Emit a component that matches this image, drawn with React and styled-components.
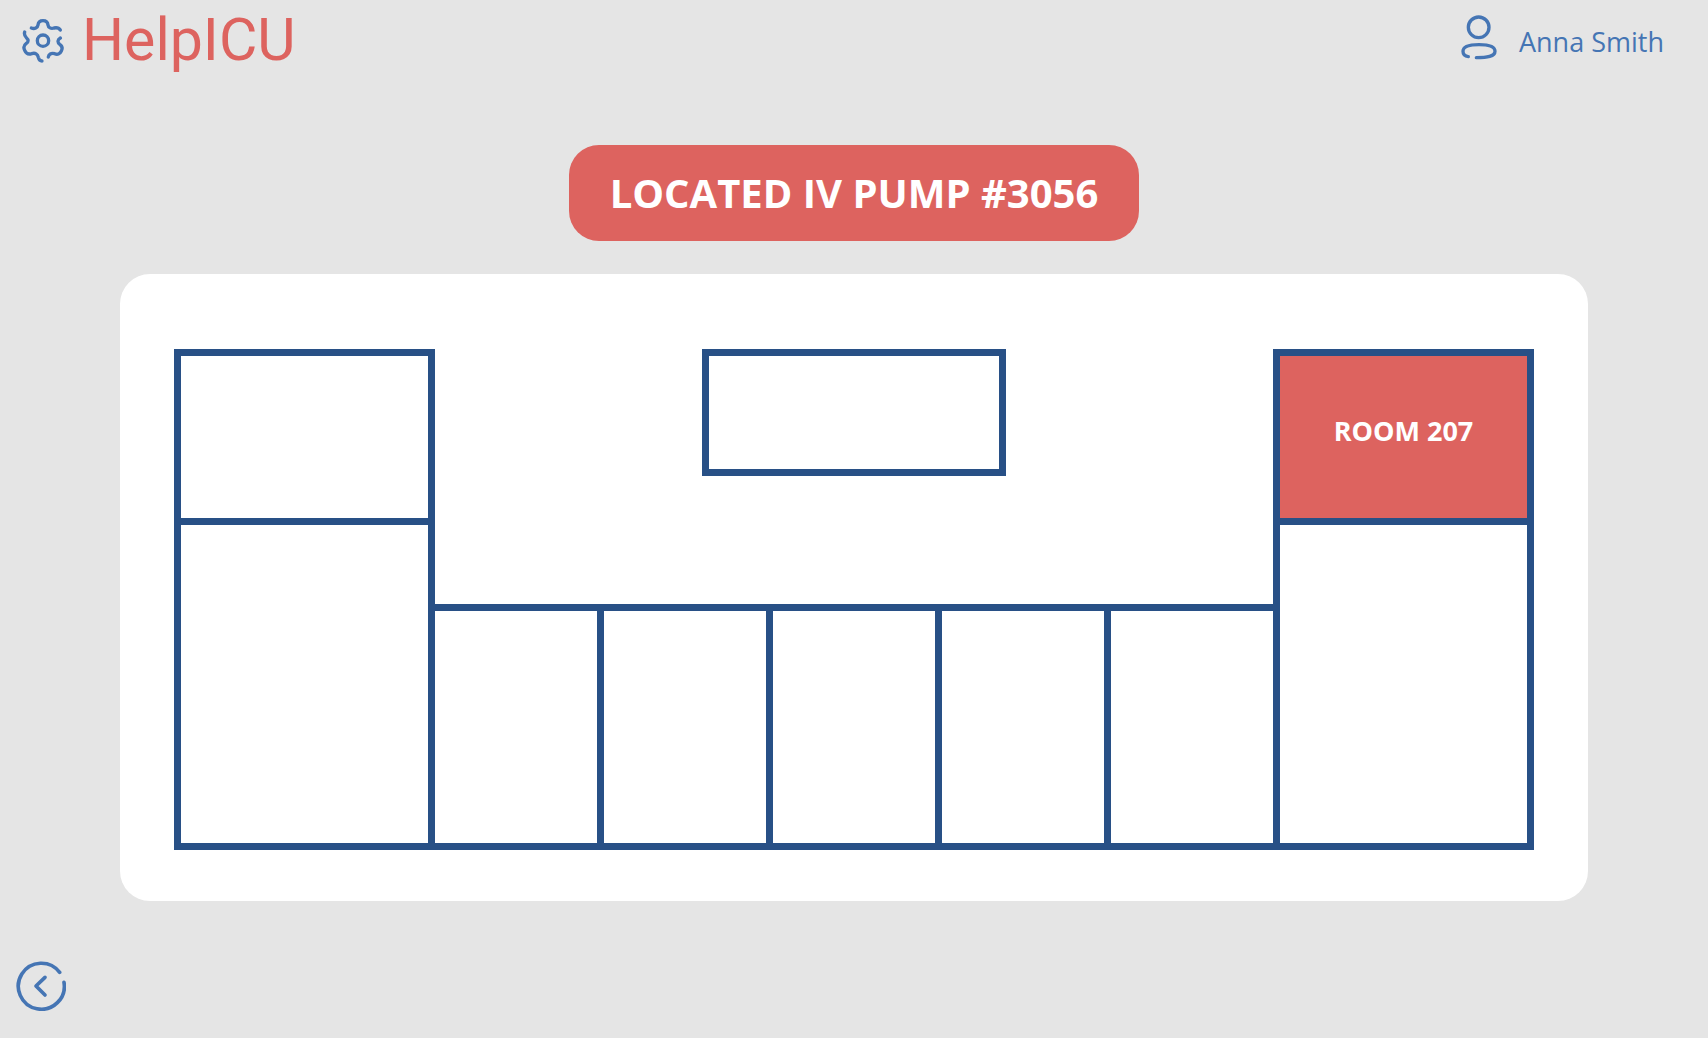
import React from "react";
import styled, { createGlobalStyle } from "styled-components";

const color = {
  page: "#e5e5e5",
  card: "#ffffff",
  accent: "#dd635f",
  wall: "#285086",
  link: "#4575b4",
};
const WALL = `7px solid ${color.wall}`;

const GlobalStyle = createGlobalStyle`
  *, *::before, *::after { box-sizing: border-box; }
  body {
    margin: 0;
    background: ${color.page};
    font-family: "Open Sans", "Noto Sans", sans-serif;
  }
`;

const Page = styled.div`
  min-height: 100vh;
  display: flex;
  flex-direction: column;
`;

const Header = styled.header`
  display: flex;
  justify-content: space-between;
  align-items: flex-start;
  padding: 15px 44px 0 22px;
`;

const Brand = styled.div`
  display: flex;
  align-items: center;
  gap: 18px;
  height: 50px;
`;

const IconButton = styled.button`
  display: flex;
  padding: 0;
  border: 0;
  background: none;
  color: ${color.link};
  cursor: pointer;
`;

const Icon = styled.svg`
  display: block;
  fill: none;
  stroke: currentColor;
  stroke-linecap: round;
  stroke-linejoin: round;
`;

const Logo = styled.a`
  color: ${color.accent};
  font-family: Roboto, sans-serif;
  font-size: 59px;
  line-height: 50px;
  text-decoration: none;
`;

const Account = styled.a`
  display: flex;
  align-items: flex-start;
  gap: 22px;
  color: ${color.link};
  font-size: 27px;
  line-height: 54px;
  text-decoration: none;
`;

const Main = styled.main`
  display: flex;
  flex-direction: column;
  align-items: center;
  gap: 33px;
  padding: 76px 120px 32px;
`;

const Banner = styled.h1`
  margin: 0;
  padding: 0 41px;
  border-radius: 30px;
  background: ${color.accent};
  color: #fff;
  font-size: 40px;
  font-weight: 700;
  line-height: 96px;
`;

const Card = styled.section`
  width: 100%;
  padding: 75px 54px 51px;
  border-radius: 30px;
  background: ${color.card};
`;

const FloorPlan = styled.div`
  display: grid;
  grid-template-columns: 261fr 838fr 261fr;
`;

const Wing = styled.div`
  display: flex;
  flex-direction: column;
  border: ${WALL};
`;

const WingRoom = styled.div`
  display: flex;
  align-items: center;
  justify-content: center;
  height: ${(p) => (p.$large ? 318 : 169)}px;
  padding-bottom: 12px;
  border-bottom: ${(p) => (p.$large ? "0" : WALL)};
  background: ${(p) => (p.$located ? color.accent : "transparent")};
  color: #fff;
  font-size: 27px;
  font-weight: 700;
  line-height: 32px;
`;

const Center = styled.div`
  display: flex;
  flex-direction: column;
`;

const Hall = styled.div`
  display: flex;
  justify-content: center;
  align-items: flex-start;
  height: 255px;
`;

const Station = styled.div`
  width: 304px;
  height: 127px;
  border: ${WALL};
`;

const Ward = styled.div`
  flex: 1;
  display: grid;
  grid-template-columns: repeat(5, 1fr);
  column-gap: 7px;
  border-top: ${WALL};
  border-bottom: ${WALL};
  background: ${color.wall};
`;

const WardRoom = styled.div`
  background: ${color.card};
`;

const Footer = styled.footer`
  display: flex;
  margin-top: auto;
  padding: 0 16px 27px;
`;

const GearIcon = () => (
  <Icon width="42" height="45" viewBox="22 22 126 135" strokeWidth="10" aria-hidden="true">
    <circle cx="85" cy="90" r="17" />
    <path d="M50 52C60 56 69 51 70 43C71 34 76 30 85 30C94 30 99 34 100 43C101 51 109 55 118 52C127 50 133 52 137 58" />
    <path d="M30 64C28 71 30 76 35 81C42 87 42 93 35 98C28 103 26 111 30 119C34 128 42 132 51 129C62 125 69 131 71 140C73 148 76 151 82 151" />
    <path d="M137 82C128 87 128 95 135 101C143 106 144 113 140 121C136 130 128 133 120 129C109 126 102 131 101 139" />
  </Icon>
);

const UserIcon = () => (
  <Icon width="36" height="45" viewBox="64 44 108 135" strokeWidth="10" aria-hidden="true">
    <circle cx="117" cy="81" r="31" />
    <path d="M86 169C76 168 70 162 70 153C70 138 93 133 118 133C145 133 166 138 166 153C166 169 143 172 110 172" />
  </Icon>
);

const BackIcon = () => (
  <Icon width="50" height="50" viewBox="48 62 150 150" strokeWidth="11" aria-hidden="true">
    <path d="M179 96A69 69 0 1 0 192 126" />
    <path d="M135 111L108 137L135 164" />
  </Icon>
);

const wardRooms = ["a", "b", "c", "d", "e"];

export default function App() {
  return (
    <Page>
      <GlobalStyle />
      <Header>
        <Brand>
          <IconButton type="button" aria-label="Settings">
            <GearIcon />
          </IconButton>
          <Logo href="#home">HelpICU</Logo>
        </Brand>
        <Account href="#account">
          <UserIcon />
          Anna Smith
        </Account>
      </Header>
      <Main>
        <Banner>LOCATED IV PUMP #3056</Banner>
        <Card aria-label="Floor plan">
          <FloorPlan>
            <Wing>
              <WingRoom />
              <WingRoom $large />
            </Wing>
            <Center>
              <Hall>
                <Station />
              </Hall>
              <Ward>
                {wardRooms.map((id) => (
                  <WardRoom key={id} />
                ))}
              </Ward>
            </Center>
            <Wing>
              <WingRoom $located>ROOM 207</WingRoom>
              <WingRoom $large />
            </Wing>
          </FloorPlan>
        </Card>
      </Main>
      <Footer>
        <IconButton type="button" aria-label="Back">
          <BackIcon />
        </IconButton>
      </Footer>
    </Page>
  );
}
